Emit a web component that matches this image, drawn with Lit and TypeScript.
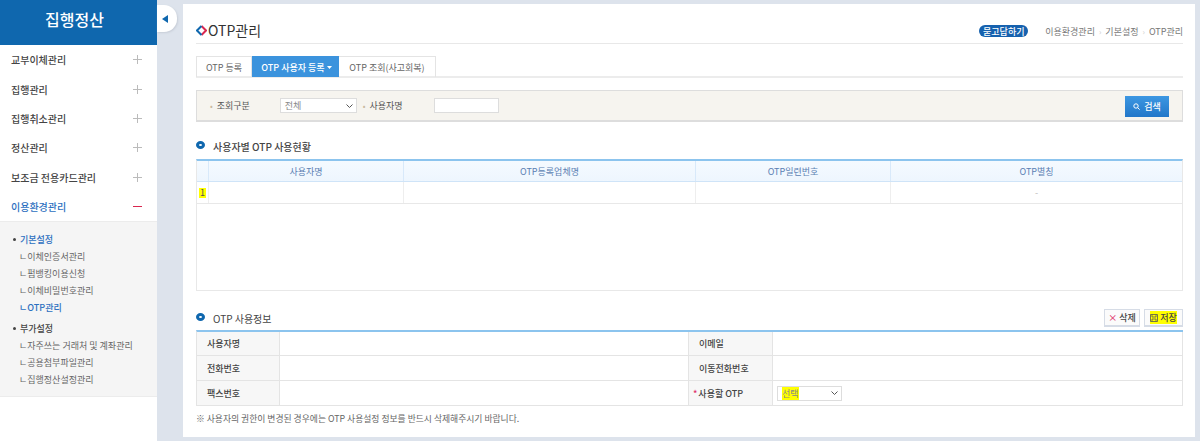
import { LitElement, html, css } from "lit";
import { customElement } from "lit/decorators.js";

const menus = ["교부이체관리", "집행관리", "집행취소관리", "정산관리", "보조금 전용카드관리"];

@customElement("app-root")
export class AppRoot extends LitElement {
  static styles = css`
    :host { display: block; width: 1200px; height: 441px; overflow: hidden; background: #dde3ec;
      font-family: "Noto Sans CJK KR", "Noto Sans", sans-serif; font-size: 9px; color: #444; }
    * { box-sizing: border-box; }
    .page { display: flex; height: 441px; }
    .side { width: 157px; height: 441px; background: #fff; flex: none; }
    .brand { height: 45px; background: #0f67ae; color: #fff; font-size: 16px; font-weight: 500; display: flex; align-items: center; justify-content: center; padding: 0 8px 7px 0; }
    .mi { height: 29.4px; display: flex; align-items: center; justify-content: space-between; padding: 0 15px 0 11px; font-size: 10px; font-weight: 500; color: #444; }
    .mi.on { color: #2c6fc0; }
    .plus { width: 9px; height: 9px; position: relative; display: block; }
    .plus::before { content: ""; position: absolute; left: 0; right: 0; top: 4px; height: 1px; background: #bbb; }
    .plus::after { content: ""; position: absolute; top: 0; bottom: 0; left: 4px; width: 1px; background: #bbb; }
    .minus { width: 9px; height: 1px; background: #d9274f; display: block; }
    .sub { height: 176px; background: #f5f5f5; border-top: 1px solid #ececec; border-bottom: 1px solid #ececec; padding: 9px 0 0 13px; font-size: 9px; color: #666; }
    .sh { display: flex; align-items: center; gap: 4px; height: 16px; color: #444; font-weight: 500; }
    .sh.on { color: #2c6fc0; }
    .sh i { width: 3px; height: 3px; border-radius: 50%; background: #444; }
    .sl { height: 16.8px; padding-left: 6px; display: flex; align-items: center; white-space: nowrap; }
    .sl.on { color: #2c6fc0; font-weight: 500; }
    .group2 { margin-top: 5px; }
    .gap { height: 1px; }
    .toggle { width: 20px; height: 27px; margin-top: 5px; background: #fff; border-radius: 0 13px 13px 0; flex: none; display: flex; align-items: center; padding-left: 5px; box-shadow: 1px 1px 2px #c8ced8; }
    .toggle svg { display: block; }
    .main { width: 1012px; height: 433px; margin: 4px 0 0 6px; background: #fff; padding: 0 12px 0 13px; flex: none; }
    .top { height: 40px; border-bottom: 1px solid #e8e8e8; display: flex; align-items: center; justify-content: space-between; margin-bottom: 12px; padding-top: 13px; }
    .title { display: flex; align-items: center; gap: 1px; font-size: 14px; color: #333; line-height: 1; }
    .crumbs { display: flex; align-items: center; font-size: 9px; color: #777; padding-top: 2px; }
    .ask { background: #1661ae; color: #fff; border-radius: 7px; height: 12px; width: 49px; display: flex; align-items: center; justify-content: center; font-weight: 500; margin-right: 17px; }
    .sep { color: #ccc; margin: 0 4px; font-size: 8px; }
    .tabs { display: flex; height: 22px; border-bottom: 2px solid #ececec; margin-bottom: 12px; }
    .tab { height: 21px; border: 1px solid #e4e4e4; border-bottom: none; border-left: 0; display: flex; align-items: center; justify-content: center; color: #666; font-size: 9px; }
    .tab.a { width: 56px; border-left: 1px solid #e4e4e4; }
    .tab.b { width: 87px; background: #3b93dd; color: #fff; font-weight: 500; border-color: #3b93dd; gap: 2px; padding-left: 3px; }
    .tab.c { width: 97px; }
    .search { height: 32px; background: #f6f4ef; border: 1px solid #ddd; border-bottom-width: 2px; display: flex; align-items: center; padding-left: 13px; color: #555; position: relative; }
    .dot { color: #c9b9a0; margin-right: 4px; font-size: 8px; }
    .lab { width: 63px; }
    .sel { height: 15px; background: #fff; border: 1px solid #ddd; display: flex; align-items: center; justify-content: space-between; padding: 0 3px 0 4px; color: #888; }
    .s1 { width: 77px; margin-right: 6px; }
    .lab2 { width: 65px; }
    .inp { width: 65px; height: 15px; background: #fff; border: 1px solid #ddd; }
    .btn-s { position: absolute; right: 13px; top: 5px; width: 44px; height: 21px; background: linear-gradient(#3d97e2, #2277c9); color: #fff; font-weight: 500; display: flex; align-items: center; justify-content: center; gap: 4px; }
    .sec { display: flex; align-items: center; gap: 8px; height: 14px; font-size: 10px; font-weight: 500; color: #444; margin: 17px 0 6px; }
    .ring { width: 9px; height: 8px; border: 3px solid #0f67ae; border-radius: 50%; display: block; margin-top: -3px; }
    .grid { height: 132px; border: 1px solid #e8e8e8; border-top: 2px solid #8cc4ee; }
    .gh, .gr { display: grid; grid-template-columns: 12px 195px 292px 195px 1fr; }
    .gh { height: 21px; background: linear-gradient(#f5faff, #eef6fe); border-bottom: 1px solid #cfe4f8; color: #5b7fb3; }
    .gh > div { display: flex; align-items: center; justify-content: center; border-right: 1px solid #d8e9fa; }
    .gh > div:last-child, .gr > div:last-child { border-right: 0; }
    .gr { height: 22px; border-bottom: 1px solid #e8e8e8; }
    .gr > div { border-right: 1px solid #eee; display: flex; justify-content: center; align-items: center; color: #bbb; }
    .num { background: #ff0; color: #555; padding: 0 1px; line-height: 10px; }
    .sec2 { margin: 20px 0 5px; font-weight: 400; }
    .acts { margin-left: auto; display: flex; gap: 4px; }
    .act { height: 18px; border: 1px solid #d6dce6; border-bottom-width: 2px; background: #fbfbfb; display: flex; align-items: center; justify-content: center; gap: 2px; font-size: 9px; font-weight: 500; color: #444; }
    .del { width: 36px; }
    .save { width: 39px; }
    .x { color: #e0336b; font-size: 9px; }
    mark { background: #ff0; color: inherit; display: inline-flex; align-items: center; gap: 2px; }
    .form { border-top: 2px solid #8cc4ee; display: grid; grid-template-columns: 83px 409px 84px 1fr; border-left: 1px solid #e4e4e4; }
    .form > div { height: 25px; display: flex; align-items: center; border-right: 1px solid #e4e4e4; border-bottom: 1px solid #e4e4e4; }
    .form > div:nth-child(-n + 4) { height: 24px; }
    .th { background: #f7f7f7; padding-left: 10px; font-weight: 500; color: #444; }
    .th.r { padding-left: 4px; gap: 1px; }
    .td { padding-left: 4px; }
    .s2 { width: 65px; color: #888; }
    .req { color: #e0336b; }
    .note { margin-top: 6px; font-size: 8.8px; color: #666; }
  `;

  render() {
    const chevron = html`<svg width="7" height="4" viewBox="0 0 7 4"><path d="M.5.5 3.5 3.5 6.5.5" fill="none" stroke="#555" stroke-width="1"/></svg>`;
    return html`<div class="page">
      <aside class="side">
        <div class="brand">집행정산</div>
        <div>
          ${menus.map((m) => html`<div class="mi"><span>${m}</span><span class="plus"></span></div>`)}
          <div class="mi on"><span>이용환경관리</span><span class="minus"></span></div>
        </div>
        <div class="sub">
          <div class="sh on"><i></i>기본설정</div>
          <div class="gap"></div>
          <div class="sl">ㄴ이체인증서관리</div>
          <div class="sl">ㄴ펌뱅킹이용신청</div>
          <div class="sl">ㄴ이체비밀번호관리</div>
          <div class="sl on">ㄴOTP관리</div>
          <div class="sh group2"><i></i>부가설정</div>
          <div class="gap"></div>
          <div class="sl">ㄴ자주쓰는 거래처 및 계좌관리</div>
          <div class="sl">ㄴ공용첨부파일관리</div>
          <div class="sl">ㄴ집행정산설정관리</div>
        </div>
      </aside>
      <div class="toggle"><svg width="6" height="8" viewBox="0 0 6 8"><path d="M6 0v8L0 4z" fill="#0f67ae"/></svg></div>
      <main class="main">
        <div class="top">
          <div class="title">
            <svg width="11" height="11" viewBox="0 0 11 11"><path d="M5.5 1 10 5.5 5.5 10" fill="none" stroke="#d9274f" stroke-width="2"/><path d="M5.5 1 1 5.5 5.5 10" fill="none" stroke="#0f67ae" stroke-width="2"/></svg>
            <span>OTP관리</span>
          </div>
          <div class="crumbs"><span class="ask">묻고답하기</span>이용환경관리<span class="sep">›</span>기본설정<span class="sep">›</span>OTP관리</div>
        </div>
        <div class="tabs">
          <div class="tab a">OTP 등록</div>
          <div class="tab b">OTP 사용자 등록<svg width="5" height="3" viewBox="0 0 5 3"><path d="M0 0h5L2.5 3z" fill="#fff"/></svg></div>
          <div class="tab c">OTP 조회(사고회복)</div>
        </div>
        <div class="search">
          <span class="dot">•</span><span class="lab">조회구분</span>
          <div class="sel s1"><span>전체</span>${chevron}</div>
          <span class="dot">•</span><span class="lab2">사용자명</span>
          <div class="inp"></div>
          <div class="btn-s"><svg width="7" height="7" viewBox="0 0 7 7"><circle cx="3" cy="3" r="2.2" fill="none" stroke="#fff"/><path d="m4.6 4.6 2 2" stroke="#fff"/></svg>검색</div>
        </div>
        <div class="sec"><span class="ring"></span>사용자별 OTP 사용현황</div>
        <div class="grid">
          <div class="gh"><div></div><div>사용자명</div><div>OTP등록업체명</div><div>OTP일련번호</div><div>OTP별칭</div></div>
          <div class="gr"><div><span class="num">1</span></div><div></div><div></div><div></div><div>-</div></div>
        </div>
        <div class="sec sec2"><span class="ring"></span>OTP 사용정보
          <div class="acts">
            <div class="act del"><span class="x">×</span>삭제</div>
            <div class="act save"><mark><svg width="8" height="8" viewBox="0 0 8 8"><path d="M.5.5h7v7h-7z M2 .5v2.5h4V.5 M2 7.5V5h4v2.5" fill="none" stroke="#555" stroke-width=".8"/></svg>저장</mark></div>
          </div>
        </div>
        <div class="form">
          <div class="th">사용자명</div><div class="td"></div><div class="th">이메일</div><div class="td"></div>
          <div class="th">전화번호</div><div class="td"></div><div class="th">이동전화번호</div><div class="td"></div>
          <div class="th">팩스번호</div><div class="td"></div><div class="th r"><span class="req">*</span>사용할 OTP</div>
          <div class="td"><div class="sel s2"><mark>선택</mark>${chevron}</div></div>
        </div>
        <div class="note">※ 사용자의 권한이 변경된 경우에는 OTP 사용설정 정보를 반드시 삭제해주시기 바랍니다.</div>
      </main>
    </div>`;
  }
}
